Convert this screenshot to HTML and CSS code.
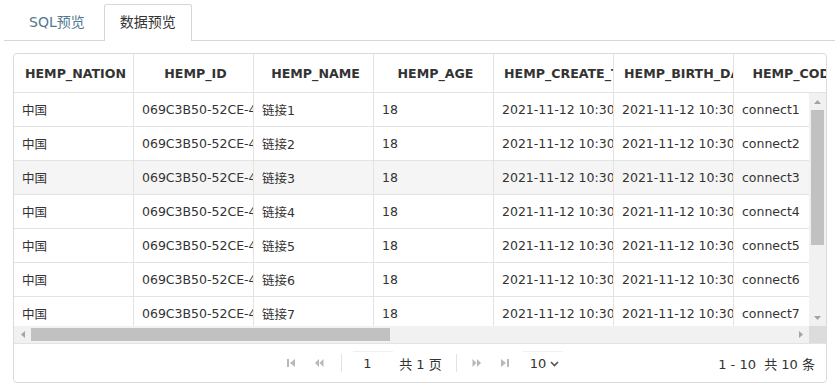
FILE: index.html
```html
<!DOCTYPE html>
<html lang="zh-CN">
  <head>
    <meta charset="UTF-8" />
    <meta name="viewport" content="width=device-width, initial-scale=1.0" />
    <title>数据预览</title>
    <link rel="stylesheet" href="styles.css">
  </head>
  <body>
    <div class="tabstrip">
      <ul class="tab-list">
        <li class="tab">SQL预览</li>
        <li class="tab active">数据预览</li>
      </ul>

      <div class="tab-panel">
        <div class="grid">
          <div class="grid-header">
            <table>
              <colgroup id="headCols"></colgroup>
              <thead>
                <tr id="headRow"></tr>
              </thead>
            </table>
          </div>

          <div class="grid-body">
            <div class="grid-content">
              <table>
                <colgroup id="bodyCols"></colgroup>
                <tbody id="bodyRows"></tbody>
              </table>
            </div>

            <div class="vscroll">
              <span class="sb-btn">
                <svg width="7" height="4" viewBox="0 0 7 4"><path d="M0 4 L3.5 0 L7 4 Z" /></svg>
              </span>
              <div class="sb-track"><div class="sb-thumb"></div></div>
              <span class="sb-btn">
                <svg width="7" height="4" viewBox="0 0 7 4"><path d="M0 0 L3.5 4 L7 0 Z" /></svg>
              </span>
            </div>

            <div class="hscroll">
              <span class="sb-btn">
                <svg width="4" height="7" viewBox="0 0 4 7"><path d="M4 0 L0 3.5 L4 7 Z" /></svg>
              </span>
              <div class="sb-track"><div class="sb-thumb"></div></div>
              <span class="sb-btn">
                <svg width="4" height="7" viewBox="0 0 4 7"><path d="M0 0 L4 3.5 L0 7 Z" /></svg>
              </span>
            </div>

            <div class="sb-corner"></div>
          </div>

          <div class="pager">
            <div class="pager-nav">
              <span class="pager-btn">
                <svg width="10" height="10" viewBox="0 0 10 10"><rect x="1" y="1" width="2" height="8" /><path d="M9 1 L4 5 L9 9 Z" /></svg>
              </span>
              <span class="pager-btn">
                <svg width="10" height="10" viewBox="0 0 10 10"><path d="M5 1 L1 5 L5 9 Z M9.5 1 L5.5 5 L9.5 9 Z" /></svg>
              </span>
              <span class="pager-sep"></span>
              <span class="pager-input">1</span>
              <span class="pager-total">共 1 页</span>
              <span class="pager-sep"></span>
              <span class="pager-btn">
                <svg width="10" height="10" viewBox="0 0 10 10"><path d="M0.5 1 L4.5 5 L0.5 9 Z M5 1 L9 5 L5 9 Z" /></svg>
              </span>
              <span class="pager-btn">
                <svg width="10" height="10" viewBox="0 0 10 10"><path d="M1 1 L6 5 L1 9 Z" /><rect x="7" y="1" width="2" height="8" /></svg>
              </span>
              <span class="pager-size">
                10
                <svg width="9" height="6" viewBox="0 0 9 6"><path d="M1 1 L4.5 4.5 L8 1" /></svg>
              </span>
            </div>
            <div class="pager-info">1 - 10&nbsp;&nbsp;共 10 条</div>
          </div>
        </div>
      </div>
    </div>

    <script>
      const columns = [
        "HEMP_NATION", "HEMP_ID", "HEMP_NAME", "HEMP_AGE",
        "HEMP_CREATE_TIME", "HEMP_BIRTH_DAY", "HEMP_CODE", "HEMP_TYPE",
        "HEMP_STATUS", "HEMP_ADDRESS", "HEMP_PHONE", "HEMP_EMAIL",
        "HEMP_REMARK", "HEMP_UPDATE_TIME"
      ];

      function buildCols(id) {
        let cols = document.getElementById(id);
        columns.forEach(() => {
          cols.appendChild(document.createElement("col"));
        });
      }

      buildCols("headCols");
      buildCols("bodyCols");

      let headRow = document.getElementById("headRow");
      columns.forEach((name) => {
        let th = document.createElement("th");
        th.innerText = name;
        headRow.appendChild(th);
      });

      let body = document.getElementById("bodyRows");
      for (let i = 1; i <= 10; i++) {
        let row = [
          "中国",
          "069C3B50-52CE-4A8E-9F1D-0" + (1000 + i),
          "链接" + i,
          "18",
          "2021-11-12 10:30:00",
          "2021-11-12 10:30:00",
          "connect" + i,
          "1",
          "正常",
          "北京市",
          "1380000000" + (i % 10),
          "user" + i + "@test.com",
          "",
          "2021-11-12 10:30:00"
        ];
        let tr = document.createElement("tr");
        if (i === 3) tr.className = "hover";
        row.forEach((value) => {
          let td = document.createElement("td");
          td.innerText = value;
          tr.appendChild(td);
        });
        body.appendChild(tr);
      }
    </script>
  </body>
</html>
```

FILE: styles.css
```css
body {
  margin: 0;
  padding: 4px 0 0 4px;
  font-family: "DejaVu Sans", "Noto Sans CJK SC", sans-serif;
  font-size: 12px;
  color: #333;
  background: #fff;
}

/* tabs */
.tab-list {
  list-style: none;
  margin: 0;
  padding: 0 0 0 9px;
  display: flex;
  gap: 3px;
  border-bottom: 1px solid #d6d6d6;
}
.tab {
  height: 36px;
  line-height: 34px;
  padding: 0 15px;
  font-size: 14px;
  color: #52788e;
  border: 1px solid transparent;
  border-bottom: 0;
  border-radius: 3px 3px 0 0;
  margin-bottom: -1px;
}
.tab.active {
  color: #333;
  background: #fff;
  border-color: #d6d6d6;
}
.tab-panel {
  padding: 12px 8px 0 9px;
}

/* grid */
.grid {
  border: 1px solid #dadada;
  border-radius: 4px;
  overflow: hidden;
}
.grid table {
  width: 1680px;
  table-layout: fixed;
  border-collapse: separate;
  border-spacing: 0;
}
.grid col {
  width: 120px;
}
.grid th,
.grid td {
  box-sizing: border-box;
  padding: 0 0 0 8px;
  white-space: nowrap;
  overflow: hidden;
  border-right: 1px solid #e3e3e3;
}
.grid-header {
  overflow: hidden;
  border-bottom: 1px solid #e3e3e3;
}
.grid th {
  height: 38px;
  padding: 0 6px 0 10px;
  font-size: 12.6px;
  font-weight: bold;
  text-align: center;
  color: #333;
}
.grid td {
  height: 34px;
  font-size: 12.5px;
  text-align: left;
  border-bottom: 1px solid #e3e3e3;
}
.grid tr.hover td {
  background: #f5f5f5;
}

.grid-body {
  display: grid;
  grid-template-columns: 1fr 17px;
  grid-template-rows: 233px 17px;
}
.grid-content {
  overflow: hidden;
}

/* scrollbars */
.vscroll,
.hscroll {
  display: flex;
  background: #f1f1f1;
}
.vscroll {
  flex-direction: column;
}
.sb-btn {
  width: 17px;
  height: 17px;
  flex: none;
  display: flex;
  align-items: center;
  justify-content: center;
}
.sb-btn svg {
  fill: #a3a3a3;
}
.sb-track {
  flex: 1;
}
.vscroll .sb-thumb {
  height: 135px;
  margin: 0 2px;
  background: #c1c1c1;
}
.hscroll .sb-thumb {
  width: 359px;
  height: 100%;
  margin: 0;
  border-top: 2px solid #f1f1f1;
  border-bottom: 2px solid #f1f1f1;
  box-sizing: border-box;
  background: #c1c1c1;
}
.sb-corner {
  background: #dcdcdc;
}

/* pager */
.pager {
  height: 38px;
  border-top: 1px solid #e3e3e3;
  display: grid;
  grid-template-columns: 1fr auto 1fr;
  align-items: center;
  font-size: 13px;
}
.pager-nav {
  grid-column: 2;
  display: flex;
  align-items: center;
}
.pager-btn {
  width: 28px;
  height: 26px;
  display: flex;
  align-items: center;
  justify-content: center;
}
.pager-btn svg {
  fill: #b8b8b8;
}
.pager-sep {
  width: 1px;
  height: 18px;
  background: #e3e3e3;
  margin: 0 11px 0 8px;
}
.pager-input {
  width: 40px;
  height: 24px;
  line-height: 24px;
  box-sizing: border-box;
  padding-left: 10px;
  border-top: 1px solid #f0f0f0;
}
.pager-total {
  margin: 0 14px 0 6px;
}
.pager-total + .pager-sep {
  margin: 0 6px 0 0;
}
.pager-size {
  width: 40px;
  height: 24px;
  margin-left: 4px;
  box-sizing: border-box;
  padding-left: 7px;
  display: flex;
  align-items: center;
  gap: 4px;
  border-top: 1px solid #f0f0f0;
}
.pager-size svg {
  fill: none;
  stroke: #555;
  stroke-width: 1.6;
}
.pager-info {
  grid-column: 3;
  justify-self: end;
  padding-right: 11px;
}
```
